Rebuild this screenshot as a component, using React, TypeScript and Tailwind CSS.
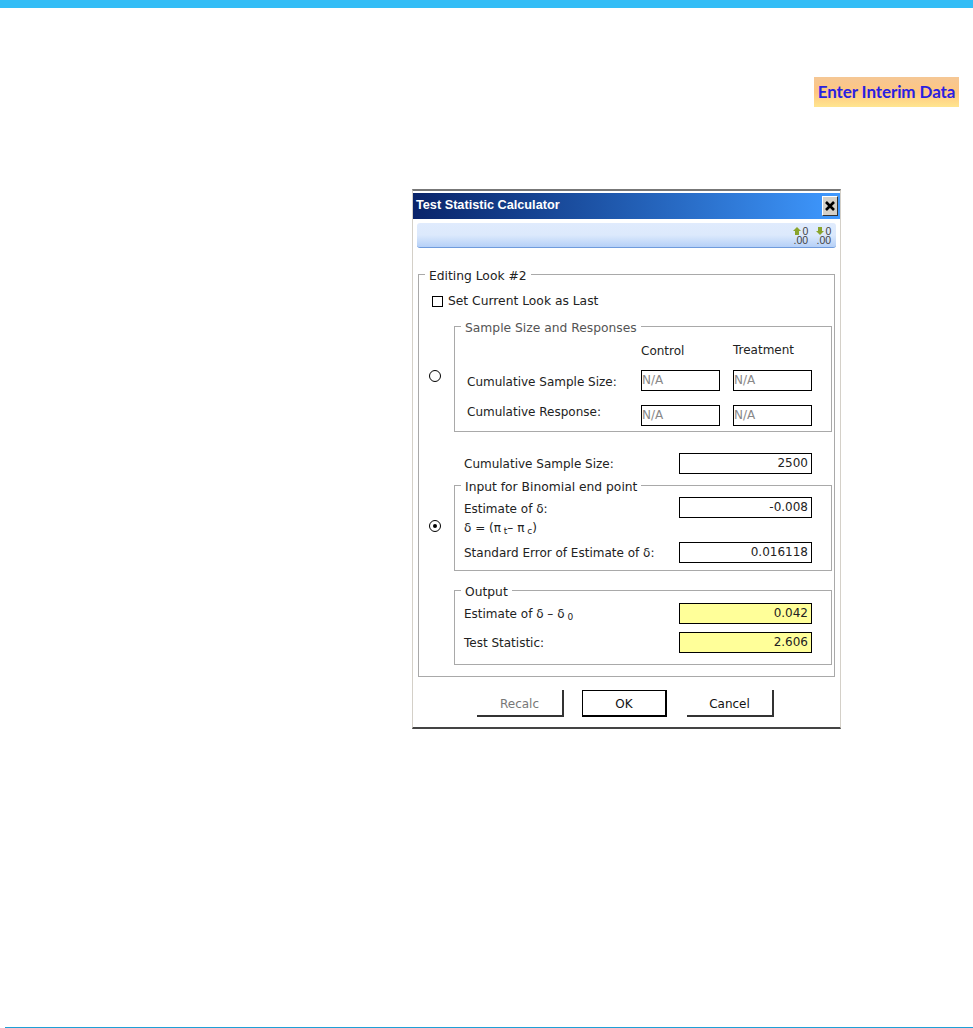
const font = "font-['DejaVu_Sans',sans-serif]";

const GroupBox = ({
  title,
  className,
  legendClass,
  children,
}: {
  title: string;
  className: string;
  legendClass?: string;
  children: React.ReactNode;
}) => (
  <fieldset className={`border border-[#a9a9a9] ${className}`}>
    <legend className={`ml-[6px] px-[4px] pt-[2px] h-[14px] text-[12.3px] leading-[14px] ${legendClass ?? 'text-[#222]'}`}>
      {title}
    </legend>
    {children}
  </fieldset>
);

const Field = ({
  value,
  className,
  yellow,
  muted,
}: {
  value: string;
  className: string;
  yellow?: boolean;
  muted?: boolean;
}) => (
  <div
    className={`border border-black text-[12px] leading-[18px] ${className} ${
      yellow ? 'bg-[#ffff99]' : 'bg-white'
    } ${muted ? 'text-[#888] text-left' : 'text-[#222] text-right pr-[3px]'}`}
  >
    {value}
  </div>
);

const Radio = ({ checked }: { checked?: boolean }) => (
  <div className="w-[12px] h-[12px] rounded-full border border-black flex items-center justify-center bg-white">
    {checked && <div className="w-[4px] h-[4px] rounded-full bg-black" />}
  </div>
);

// toolbar glyph: arrow over a decimal, drawn as one small picture
const DecimalIcon = ({ up }: { up?: boolean }) => (
  <svg width="16" height="21" viewBox="0 0 16 21" fontFamily="Liberation Sans, sans-serif" fontSize="10.5" fill="#444">
    {up ? (
      <path d="M4 2 L8 6 H6 V10 H2 V6 H0 Z" fill="#8aa52c" />
    ) : (
      <path d="M4 10 L8 6 H6 V2 H2 V6 H0 Z" fill="#8aa52c" />
    )}
    <text x="9.5" y="10">0</text>
    <text x="0.5" y="18.5">.00</text>
  </svg>
);

const DialogButton = ({ label, primary, disabled }: { label: string; primary?: boolean; disabled?: boolean }) => (
  <div
    className={`h-[27px] pt-[2px] flex items-center justify-center text-[12px] ${
      primary
        ? 'w-[85px] border border-black border-r-2 border-b-2'
        : 'w-[87px] border-r-2 border-b-2 border-[#333]'
    } ${disabled ? 'text-[#777]' : 'text-[#111]'}`}
  >
    {label}
  </div>
);

export default function App() {
  return (
    <div className={`relative w-[973px] h-[1028px] bg-white overflow-hidden flex flex-col ${font}`}>
      <div className="h-[8px] bg-[#33bdf6]" />

      <div className="flex justify-end pr-[14px] mt-[69px]">
        <div className="w-[145px] h-[30px] flex items-center justify-center bg-gradient-to-b from-[#f5c795] via-[#ffc680] to-[#ffe58f] text-[#2a1fe0] text-[17px] font-bold tracking-[-0.1px] font-['Lato',sans-serif]">
          Enter Interim Data
        </div>
      </div>

      <div className="ml-[412px] mt-[82px] w-[429px] h-[540px] flex flex-col border-x border-[#d4d0c8] border-t-2 border-t-[#777] border-b-2 border-b-[#444]">
        <div className="mt-[2px] h-[26px] flex items-center justify-between pl-[3px] pr-[2px] bg-gradient-to-r from-[#0a246a] to-[#3f99ff]">
          <span className="text-white text-[12.7px] font-bold font-['Liberation_Sans',sans-serif]">Test Statistic Calculator</span>
          <div className="w-[16px] h-[20px] bg-[#d4d0c8] border border-t-white border-l-white border-r-[#333] border-b-[#333] flex items-center justify-center">
            <svg width="10" height="10" viewBox="0 0 10 10">
              <path d="M1 1 L9 9 M9 1 L1 9" stroke="#000" strokeWidth="2.6" fill="none" />
            </svg>
          </div>
        </div>

        <div className="mx-[4px] mt-[4px] h-[25px] flex items-center justify-end gap-[7px] pr-[4px] rounded-[3px] bg-gradient-to-b from-[#e0ebfd] via-[#dce9fc] to-[#b5d0f7] border-b border-[#6f9bdc]">
          <DecimalIcon up />
          <DecimalIcon />
        </div>

        <GroupBox title="Editing Look #2" className="ml-[5px] mt-[19px] w-[417px] h-[410px]">
          <div className="mt-[14px] ml-[13px] flex items-center gap-[5px] h-[12px]">
            <div className="w-[11px] h-[11px] border border-black" />
            <span className="pt-[1px] text-[12.3px] text-[#222]">Set Current Look as Last</span>
          </div>

          <div className="mt-[12px] flex">
            <div className="w-[35px] pl-[10px] pt-[51px]">
              <Radio />
            </div>
            <GroupBox
              title="Sample Size and Responses"
              className="w-[378px] h-[113px]"
              legendClass="text-[#555]"
            >
              <div className="grid grid-cols-[161px_79px_79px] gap-x-[13px] pl-[12px] text-[12px] text-[#222]">
                <span />
                <span className="h-[37px] pt-[9px]">Control</span>
                <span className="h-[37px] pt-[8px]">Treatment</span>
                <span className="h-[35px] pt-[3px] whitespace-nowrap">Cumulative Sample Size:</span>
                <Field value="N/A" muted className="h-[21px]" />
                <Field value="N/A" muted className="h-[21px]" />
                <span className="-mt-[2px] whitespace-nowrap">Cumulative Response:</span>
                <Field value="N/A" muted className="h-[21px]" />
                <Field value="N/A" muted className="h-[21px]" />
              </div>
            </GroupBox>
          </div>

          <div className="ml-[45px] mt-[21px] flex items-center justify-between w-[348px] text-[12px] text-[#222]">
            <span>Cumulative Sample Size:</span>
            <Field value="2500" className="w-[133px] h-[21px]" />
          </div>

          <div className="mt-[4px] flex">
            <div className="w-[35px] pl-[10px] pt-[42px]">
              <Radio checked />
            </div>
            <GroupBox title="Input for Binomial end point" className="w-[378px] h-[93px]">
              <div className="pl-[9px] pr-[19px] text-[12px] text-[#222]">
                <div className="flex justify-between items-start h-[26px] pt-[5px]">
                  <span className="pt-[3px]">Estimate of δ:</span>
                  <Field value="-0.008" className="w-[133px] h-[21px]" />
                </div>
                <div className="h-[24px] pt-[1px] whitespace-nowrap">
                  δ = (π<sub className="text-[9px]"> t</sub>– π<sub className="text-[9px]"> c</sub>)
                </div>
                <div className="flex justify-between items-center">
                  <span>Standard Error of Estimate of δ:</span>
                  <Field value="0.016118" className="w-[133px] h-[21px]" />
                </div>
              </div>
            </GroupBox>
          </div>

          <GroupBox title="Output" className="ml-[35px] mt-[12px] w-[378px] h-[82px]">
            <div className="pl-[9px] pr-[19px] text-[12px] text-[#222]">
              <div className="flex justify-between items-start h-[35px] pt-[6px]">
                <span className="pt-[2px]">
                  Estimate of δ – δ<sub className="text-[9px]"> 0</sub>
                </span>
                <Field value="0.042" yellow className="w-[133px] h-[21px]" />
              </div>
              <div className="flex justify-between items-center">
                <span>Test Statistic:</span>
                <Field value="2.606" yellow className="w-[133px] h-[21px]" />
              </div>
            </div>
          </GroupBox>
        </GroupBox>

        <div className="mt-[13px] ml-[64px] flex">
          <DialogButton label="Recalc" disabled />
          <div className="w-[18px]" />
          <DialogButton label="OK" primary />
          <div className="w-[20px]" />
          <DialogButton label="Cancel" />
        </div>
      </div>

      <div className="mt-auto ml-[5px] h-[1px] bg-[#1f9fd6]" />
    </div>
  );
}
